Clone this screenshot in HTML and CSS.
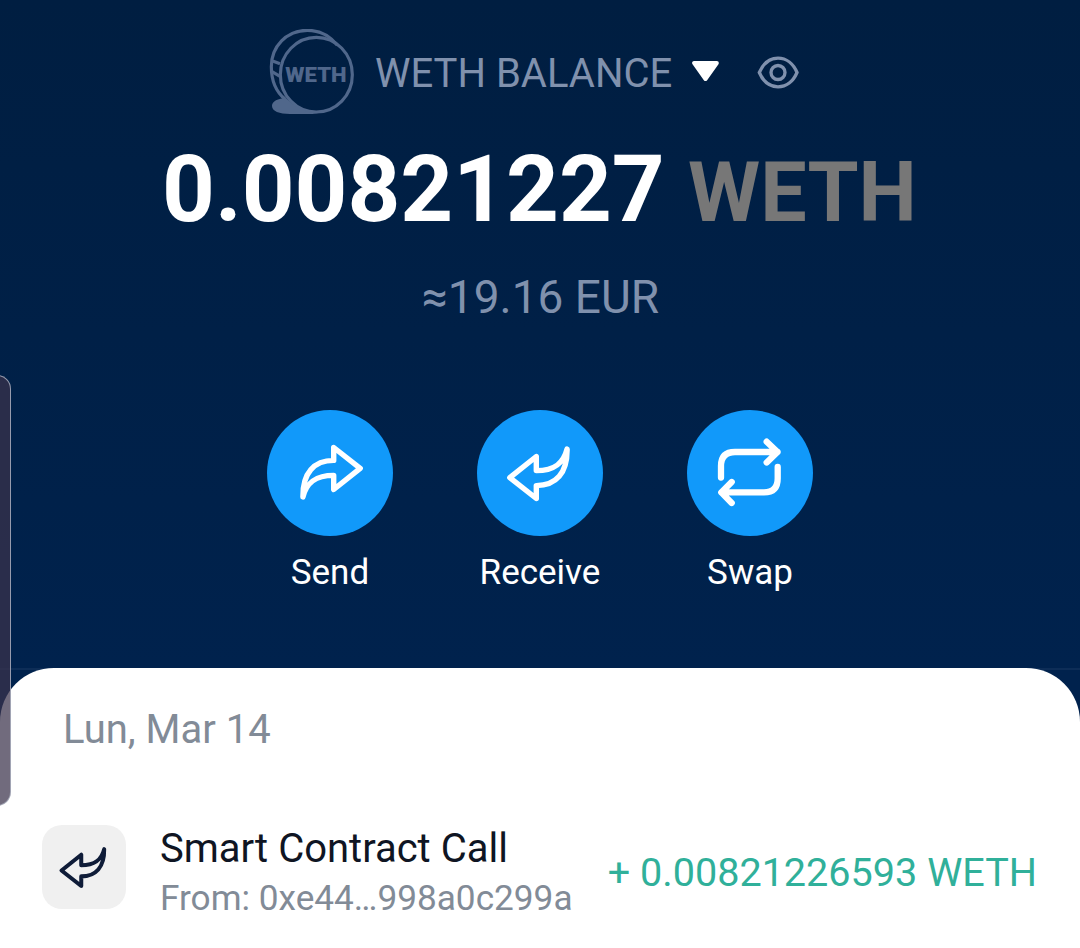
FILE: index.html
```html
<!DOCTYPE html>
<html lang="en">

<head>
    <meta charset="UTF-8">
    <meta name="viewport" content="width=device-width, initial-scale=1.0">
    <title>Wallet</title>
    <link rel="stylesheet" href="styles.css">
</head>

<body>
    <div class="edge-handle"></div>
    <div class="wallet-head">
        <div class="wallet-title">
            <svg class="token-logo" viewBox="57 42 258 255">
                <ellipse cx="199" cy="179" rx="108" ry="112" />
                <path d="M262 91C238 60 208 46 172 46C110 46 64 94 64 155C64 196 80 232 106 253" />
                <path d="M68 138L90 146M66 170L90 184" />
                <path class="token-logo-shadow"
                    d="M108 249C84 250 66 259 66 273C66 289 88 297 120 297H205C168 293 134 277 108 249Z" />
                <text x="106" y="200" textLength="184" lengthAdjust="spacingAndGlyphs">WETH</text>
            </svg>
            <span class="wallet-name">WETH BALANCE</span>
            <svg class="caret" viewBox="425 138 80 60">
                <path d="M431 144H499L465 192Z" />
            </svg>
            <svg class="eye" viewBox="622 122 126 98">
                <path
                    d="M629 171C640 145 660 128 685 128S731 145 742 171C731 197 710 214 685 214S640 197 629 171Z" />
                <circle cx="685" cy="171" r="21" />
            </svg>
        </div>
        <div class="balance">
            <span class="balance-value">0.00821227</span>
            <span class="balance-unit">WETH</span>
        </div>
        <p class="balance-fiat">≈19.16 EUR</p>
        <div class="actions">
            <div class="action">
                <div class="action-button">
                    <svg class="icon" viewBox="0 0 126 126">
                        <path
                            d="M66.7 37.5L93.2 58.3L66.7 79.5V65.4C48 65.4 39.5 73 35.9 87C35.5 63 47 50.4 66.7 50.4Z" />
                    </svg>
                </div>
                <p class="action-label">Send</p>
            </div>
            <div class="action">
                <div class="action-button">
                    <svg class="icon" viewBox="0 0 126 126">
                        <path transform="rotate(180 63 63)"
                            d="M66.7 37.5L93.2 58.3L66.7 79.5V65.4C48 65.4 39.5 73 35.9 87C35.5 63 47 50.4 66.7 50.4Z" />
                    </svg>
                </div>
                <p class="action-label">Receive</p>
            </div>
            <div class="action">
                <div class="action-button">
                    <svg class="icon icon-swap" viewBox="0 0 126 126">
                        <path d="M34 67.5V56Q34 42 48 42H90.5M79.7 31.7L90.5 42L79.7 52.5" />
                        <path d="M90.7 57V68.5Q90.7 82.4 77 82.4H34.5M44.7 72L34.3 82.4L44.7 93" />
                    </svg>
                </div>
                <p class="action-label">Swap</p>
            </div>
        </div>
    </div>
    <div class="history">
        <p class="history-date">Lun, Mar 14</p>
        <div class="transaction">
            <div class="transaction-icon">
                <svg class="icon" viewBox="6.6 6.6 112.8 112.8">
                    <path transform="rotate(180 63 63)"
                        d="M66.7 37.5L93.2 58.3L66.7 79.5V65.4C48 65.4 39.5 73 35.9 87C35.5 63 47 50.4 66.7 50.4Z" />
                </svg>
            </div>
            <div class="transaction-info">
                <p class="transaction-title">Smart Contract Call</p>
                <p class="transaction-from">From: 0xe44…998a0c299a</p>
            </div>
            <p class="transaction-amount">+ 0.00821226593 WETH</p>
        </div>
    </div>
</body>

</html>
```

FILE: styles.css
```css
body {
    margin: 0;
    height: 948px;
    overflow: hidden;
    background: linear-gradient(#001e41, #00224d 668px);
    font-family: Roboto, "Liberation Sans", sans-serif;
    white-space: nowrap;
}

p {
    margin: 0;
}

svg {
    display: block;
    flex-shrink: 0;
}

/* system edge panel, lies over the page */
.edge-handle {
    position: absolute;
    left: -20px;
    top: 375px;
    box-sizing: border-box;
    width: 31px;
    height: 431px;
    border: 1px solid rgba(170, 175, 190, 0.85);
    border-radius: 14px;
    background-color: rgba(58, 50, 75, 0.72);
    z-index: 1;
}

.wallet-head {
    box-sizing: border-box;
    height: 670px;
    padding-top: 28px;
    /* hairline left visible beside the rounded sheet */
    border-bottom: 2px solid #0d2d57;
}

.wallet-title {
    display: flex;
    align-items: center;
    height: 90px;
    padding-left: 269px;
}

.token-logo {
    width: 86px;
    height: 85px;
    margin-top: -3px;
    fill: none;
    stroke: #50678b;
    stroke-width: 9.5;
}

.token-logo-shadow,
.token-logo text {
    fill: #50678b;
    stroke: none;
}

.token-logo text {
    font-family: Roboto, sans-serif;
    font-size: 58px;
    font-weight: 900;
}

.wallet-name {
    margin-top: 2px;
    margin-left: 20px;
    width: 317px;
    font-size: 40px;
    line-height: 48px;
    color: #8091ad;
}

.caret {
    width: 27px;
    height: 20px;
    margin-top: -4px;
    fill: white;
    stroke: white;
    stroke-width: 12;
    stroke-linejoin: round;
}

.eye {
    width: 42px;
    height: 33px;
    margin-top: -2px;
    margin-left: 38px;
    fill: none;
    stroke: #8091ad;
    stroke-width: 10;
}

.balance {
    display: flex;
    align-items: baseline;
    height: 100px;
    margin-top: 21px;
    padding-left: 162px;
    line-height: 101px;
    font-weight: bold;
}

.balance-value {
    width: 526px;
    font-size: 92.2px;
    color: white;
}

.balance-unit {
    font-size: 82.5px;
    color: #777777;
}

.balance-fiat {
    margin-top: 28px;
    padding-left: 1px;
    text-align: center;
    font-size: 46px;
    line-height: 61px;
    color: #8091ad;
}

.actions {
    display: flex;
    justify-content: center;
    gap: 84px;
    margin-top: 82px;
}

.action {
    display: flex;
    flex-direction: column;
    align-items: center;
    gap: 13px;
    width: 126px;
}

.action-button {
    width: 126px;
    height: 126px;
    border-radius: 50%;
    background-color: #1199fa;
    color: white;
}

.action-label {
    font-size: 35px;
    line-height: 48px;
    color: white;
}

.icon {
    width: 100%;
    height: 100%;
    fill: none;
    stroke: currentColor;
    stroke-width: 5.4;
    stroke-linecap: round;
    stroke-linejoin: round;
}

.icon-swap {
    stroke-width: 6.3;
}

.history {
    box-sizing: border-box;
    height: 280px;
    margin-top: -2px;
    padding: 37px 43px 0 42px;
    border-radius: 54px 54px 0 0;
    background-color: white;
}

.history-date {
    padding-left: 21px;
    font-size: 40px;
    line-height: 50px;
    color: #828b97;
}

.transaction {
    display: flex;
    align-items: flex-start;
    margin-top: 68px;
}

.transaction-icon {
    width: 84px;
    height: 84px;
    margin-top: 2px;
    border-radius: 20px;
    background-color: #f0f0f0;
    color: #0f1c38;
}

.transaction-info {
    margin-left: 34px;
}

.transaction-title {
    font-size: 40px;
    line-height: 52px;
    color: #0f1523;
}

.transaction-from {
    font-size: 35.2px;
    line-height: 47px;
    color: #828b97;
}

.transaction-amount {
    margin-top: 25px;
    margin-left: auto;
    font-size: 39.6px;
    line-height: 50px;
    color: #30b09a;
}
```
